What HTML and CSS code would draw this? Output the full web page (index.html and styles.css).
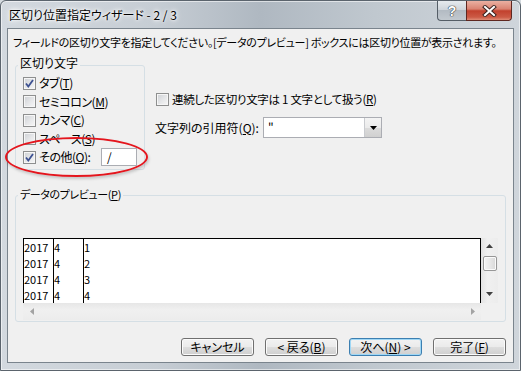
FILE: index.html
```html
<!DOCTYPE html>
<html lang="ja">
<head>
<meta charset="utf-8">
<title>区切り位置指定ウィザード</title>
<link rel="stylesheet" href="styles.css">
</head>
<body>
<div class="window">
  <div class="titlebar">
    <span class="title">区切り位置指定ウィザード - 2 / 3</span>
    <div class="caption">
      <span class="cap help"><span class="q">?</span></span>
      <span class="cap close"><svg width="15" height="12" viewBox="0 0 15 12"><path d="M3 2 L12 10 M12 2 L3 10" stroke="#3b2320" stroke-width="4" stroke-linecap="square" fill="none"/><path d="M3 2 L12 10 M12 2 L3 10" stroke="#fff" stroke-width="2" stroke-linecap="square" fill="none"/></svg></span>
    </div>
  </div>
  <div class="client">
    <p class="intro">フィールドの区切り文字を指定してください。[データのプレビュー] ボックスには区切り位置が表示されます。</p>
    <div class="options">
      <fieldset class="group delims">
        <legend>区切り文字</legend>
        <div class="row"><span class="cb"><svg width="11" height="11" viewBox="0 0 11 11"><path d="M2 5.5 L4.3 8.5 L9 2" stroke="#3d5191" stroke-width="1.8" fill="none"/></svg></span><span class="lbl">タブ(<u>T</u>)</span></div>
        <div class="row"><span class="cb"></span><span class="lbl">セミコロン(<u>M</u>)</span></div>
        <div class="row"><span class="cb"></span><span class="lbl">カンマ(<u>C</u>)</span></div>
        <div class="row"><span class="cb"></span><span class="lbl">スペース(<u>S</u>)</span></div>
        <div class="row"><span class="cb"><svg width="11" height="11" viewBox="0 0 11 11"><path d="M2 5.5 L4.3 8.5 L9 2" stroke="#3d5191" stroke-width="1.8" fill="none"/></svg></span><span class="lbl">その他(<u>O</u>):</span><span class="textbox">/</span></div>
      </fieldset>
      <div class="side">
        <div class="row single"><span class="cb"></span><span class="lbl-wide">連続した区切り文字は 1 文字として扱う(<u>R</u>)</span></div>
        <div class="quote">
          <span class="qlabel">文字列の引用符(<u>Q</u>):</span>
          <div class="combo"><span class="field">"</span><span class="drop"><svg width="7" height="4" viewBox="0 0 7 4"><path d="M0 0 H7 L3.5 4 Z" fill="#000"/></svg></span></div>
        </div>
      </div>
    </div>
    <fieldset class="group preview">
      <legend class="pv-legend">データのプレビュー(<u>P</u>)</legend>
      <div class="pv">
        <div class="pv-main">
          <div class="data">
            <div class="col c1"><div>2017</div><div>2017</div><div>2017</div><div>2017</div></div>
            <div class="col c2"><div>4</div><div>4</div><div>4</div><div>4</div></div>
            <div class="col c3"><div>1</div><div>2</div><div>3</div><div>4</div></div>
          </div>
          <div class="vscroll">
            <span class="sbtn"><svg width="7" height="4" viewBox="0 0 7 4"><path d="M3.5 0 L7 4 H0 Z" fill="#404040"/></svg></span>
            <span class="thumb"></span>
            <span class="track"></span>
            <span class="sbtn"><svg width="7" height="4" viewBox="0 0 7 4"><path d="M0 0 H7 L3.5 4 Z" fill="#404040"/></svg></span>
          </div>
        </div>
        <div class="hscroll">
          <span class="sbtn"><svg width="4" height="7" viewBox="0 0 4 7"><path d="M4 0 V7 L0 3.5 Z" fill="#a3a3a3"/></svg></span>
          <span class="sbtn"><svg width="4" height="7" viewBox="0 0 4 7"><path d="M0 0 V7 L4 3.5 Z" fill="#a3a3a3"/></svg></span>
        </div>
      </div>
    </fieldset>
    <div class="buttons">
      <button class="btn">キャンセル</button>
      <button class="btn">&lt; 戻る(<u>B</u>)</button>
      <button class="btn default">次へ(<u>N</u>) &gt;</button>
      <button class="btn">完了(<u>F</u>)</button>
    </div>
  </div>
  <div class="mark"></div>
</div>
</body>
</html>
```

FILE: styles.css
```css
* { box-sizing: border-box; }
html, body { margin: 0; padding: 0; }
body {
  width: 521px;
  height: 371px;
  overflow: hidden;
  background: #d4dadf;
  font-family: "Noto Sans CJK JP", sans-serif;
  font-size: 12px;
  color: #000;
  font-feature-settings: "palt";
}
.window {
  position: relative;
  width: 521px;
  height: 371px;
  border: 1px solid #5b646d;
  border-radius: 6px 6px 0 0;
  background: linear-gradient(90deg, #d3d9df 0%, #c6cdd4 30%, #afb8c1 50%, #c0c8cf 72%, #cfd5db 100%);
  box-shadow: inset 0 0 0 1px rgba(255,255,255,0.55);
  display: flex;
  flex-direction: column;
}
.titlebar {
  height: 27px;
  flex-shrink: 0;
  display: flex;
  align-items: center;
  padding-left: 8px;
}
.title {
  line-height: 14px;
  text-shadow: 0 0 6px #fff, 0 0 4px #fff, 0 0 2px #fff;
}
.caption {
  margin-left: auto;
  margin-right: 8px;
  align-self: flex-start;
  display: flex;
}
.cap {
  height: 20px;
  display: flex;
  align-items: center;
  justify-content: center;
  border: 1px solid #555e67;
  border-top: none;
}
.help {
  width: 29px;
  border-right: none;
  border-radius: 0 0 0 4px;
  background: linear-gradient(#e6eaee 0%, #cfd5db 45%, #b3bbc3 50%, #c2c9cf 100%);
}
.q {
  font-family: "Liberation Sans", sans-serif;
  font-weight: bold;
  font-size: 14px;
  line-height: 14px;
  color: #fff;
  text-shadow: 0 0 1px #2f363d, 0 0 1px #2f363d, 0 0 1px #2f363d;
}
.close {
  width: 46px;
  border-color: #5e2720;
  border-radius: 0 0 4px 0;
  background: linear-gradient(#eab0a2 0%, #d98372 42%, #c2412e 52%, #cc5a45 85%, #df8c76 100%);
}
.client {
  flex: 1;
  margin: 0 6px 7px 6px;
  border: 1px solid #7a848d;
  background: #f0f0f0;
  padding: 6px 7px 0 5px;
  display: flex;
  flex-direction: column;
}
.intro {
  margin: 0;
  font-size: 11px;
  letter-spacing: -0.3px;
  line-height: 14px;
  white-space: nowrap;
}
.options {
  display: flex;
  margin-top: 7px;
}
fieldset.group {
  margin: 0 0 0 2px;
  padding: 0 0 0 2px;
  border: 1px solid #d5dfe5;
  border-radius: 3px;
  min-width: 0;
}
legend {
  padding: 0 2px 4px;
  line-height: 14px;
}
.pv-legend {
  font-size: 11px;
  letter-spacing: -0.4px;
}
.delims {
  width: 130px;
  padding-bottom: 2px !important;
}
.row {
  display: flex;
  align-items: center;
  gap: 3px;
  height: 18.5px;
  margin-left: 5px;
  white-space: nowrap;
  line-height: 14px;
}
.lbl { letter-spacing: -0.5px; }
.lbl-wide { font-size: 11.5px; letter-spacing: -0.3px; }
.cb {
  width: 13px;
  height: 13px;
  flex-shrink: 0;
  border: 1px solid #8e8f8f;
  background: linear-gradient(135deg, #cdd0d4 0%, #e6e7e9 55%, #f7f7f7 100%);
  box-shadow: inset 0 0 0 1px #f6f6f6;
  display: block;
}
.cb svg { display: block; }
.textbox {
  margin-left: auto;
  margin-right: 7px;
  width: 36px;
  height: 18px;
  border: 1px solid #abadb3;
  background: #fff;
  padding-left: 5px;
  line-height: 16px;
}
.side {
  margin-left: 10px;
  padding-top: 34px;
}
.side .row {
  margin-left: 1px;
  height: 18px;
}
.quote {
  display: flex;
  align-items: center;
  margin-top: 9px;
  height: 21px;
  white-space: nowrap;
}
.qlabel {
  width: 108px;
  line-height: 14px;
}
.combo {
  width: 119px;
  height: 21px;
  display: flex;
  border: 1px solid #abadb3;
  background: #fff;
}
.field {
  flex: 1;
  padding-left: 4px;
  line-height: 19px;
}
.drop {
  width: 17px;
  border-left: 1px solid #c9cbcf;
  background: linear-gradient(#f4f4f4 0%, #ebebeb 50%, #dcdcdc 51%, #d0d0d0 100%);
  display: flex;
  align-items: center;
  justify-content: center;
}
.preview {
  margin-top: 17px !important;
  padding-bottom: 1px !important;
}
.pv {
  margin: 33px 0 0 5px;
  width: 475px;
}
.pv-main {
  display: flex;
  height: 65px;
}
.data {
  width: 458px;
  border-top: 1px solid #000;
  border-right: 1px solid #000;
  background: #fff;
  display: flex;
}
.col {
  border-left: 1px solid #000;
  font-size: 11px;
  line-height: 16px;
}
.c1, .c2 { width: 30px; }
.c3 { flex: 1; }
.vscroll {
  width: 17px;
  display: flex;
  flex-direction: column;
  background: linear-gradient(90deg, #e3e3e3, #f0f0f0 40%, #ececec);
}
.sbtn {
  width: 17px;
  height: 17px;
  display: flex;
  align-items: center;
  justify-content: center;
  flex-shrink: 0;
}
.sbtn svg { display: block; }
.thumb {
  margin: 1px 1px 0 2px;
  height: 15px;
  border: 1px solid #979797;
  border-radius: 2px;
  background: linear-gradient(90deg, #f4f4f4, #e8e8e8 50%, #d8d8d8);
  box-shadow: inset 0 0 0 1px #fbfbfb;
  flex-shrink: 0;
}
.track { flex: 1; }
.hscroll {
  width: 458px;
  height: 17px;
  display: flex;
  justify-content: space-between;
  background: linear-gradient(#e6e6e6, #f0f0f0 40%, #ececec);
}
.buttons {
  display: flex;
  justify-content: flex-end;
  gap: 11px;
  margin-top: 16px;
}
.btn {
  width: 73px;
  height: 18px;
  padding: 0;
  font: inherit;
  line-height: 14px;
  color: #000;
  border: 1px solid #707070;
  border-radius: 3px;
  background: linear-gradient(#f2f2f2 0%, #ebebeb 48%, #dddddd 52%, #cfcfcf 100%);
  box-shadow: inset 0 0 0 1px #fbfbfb;
  display: flex;
  align-items: center;
  justify-content: center;
}
.btn.default {
  border-color: #3c7fb1;
  box-shadow: inset 0 0 0 1px #9fd7f5;
}
.mark {
  position: absolute;
  left: 4px;
  top: 136px;
  width: 143px;
  height: 40px;
  border: 2px solid #e4151d;
  border-radius: 50%;
  box-shadow: 1px 2px 3px rgba(0,0,0,0.18);
}
```
